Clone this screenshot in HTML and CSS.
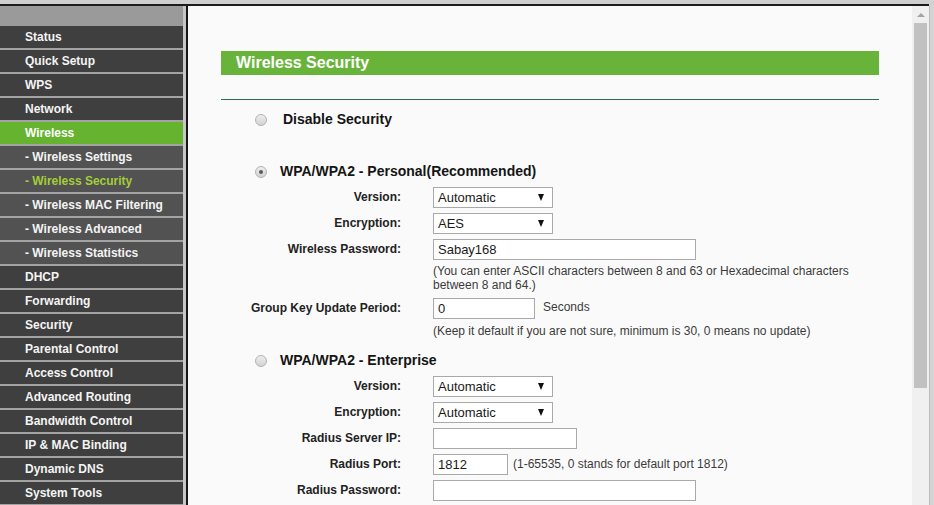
FILE: index.html
```html
<!DOCTYPE html>
<html lang="en">
<head>
    <meta charset="UTF-8">
    <title>Wireless Security</title>
    <link rel="stylesheet" href="styles.css">
</head>
<body>
    <div class="window">
        <div class="chrome-top"></div>
        <div class="frames">
            <!-- Left menu frame -->
            <nav class="menu">
                <div class="menu-head"></div>
                <a class="menu-item">Status</a>
                <a class="menu-item">Quick Setup</a>
                <a class="menu-item">WPS</a>
                <a class="menu-item">Network</a>
                <a class="menu-item active">Wireless</a>
                <a class="menu-item sub">- Wireless Settings</a>
                <a class="menu-item sub current">- Wireless Security</a>
                <a class="menu-item sub">- Wireless MAC Filtering</a>
                <a class="menu-item sub">- Wireless Advanced</a>
                <a class="menu-item sub">- Wireless Statistics</a>
                <a class="menu-item">DHCP</a>
                <a class="menu-item">Forwarding</a>
                <a class="menu-item">Security</a>
                <a class="menu-item">Parental Control</a>
                <a class="menu-item">Access Control</a>
                <a class="menu-item">Advanced Routing</a>
                <a class="menu-item">Bandwidth Control</a>
                <a class="menu-item">IP &amp; MAC Binding</a>
                <a class="menu-item">Dynamic DNS</a>
                <a class="menu-item">System Tools</a>
            </nav>
            <div class="frame-sep"></div>

            <!-- Main frame -->
            <div class="main">
                <div class="page">
                    <div class="page-title">Wireless Security</div>
                    <div class="title-rule"></div>

                    <div class="opt opt-first">
                        <span class="radio"></span>
                        <span class="opt-title wide">Disable Security</span>
                    </div>

                    <div class="opt opt-personal">
                        <span class="radio checked"></span>
                        <span class="opt-title">WPA/WPA2 - Personal(Recommended)</span>
                    </div>
                    <div class="row row-first">
                        <label>Version:</label>
                        <div class="select w-sel"><span>Automatic</span><i class="arrow"></i></div>
                    </div>
                    <div class="row">
                        <label>Encryption:</label>
                        <div class="select w-sel"><span>AES</span><i class="arrow"></i></div>
                    </div>
                    <div class="row">
                        <label>Wireless Password:</label>
                        <div class="field w-long">Sabay168</div>
                    </div>
                    <p class="help help-pass">(You can enter ASCII characters between 8 and 63 or Hexadecimal characters between 8 and 64.)</p>
                    <div class="row row-group">
                        <label>Group Key Update Period:</label>
                        <div class="field w-group">0</div>
                        <span class="unit">Seconds</span>
                    </div>
                    <p class="help help-group">(Keep it default if you are not sure, minimum is 30, 0 means no update)</p>

                    <div class="opt opt-enterprise">
                        <span class="radio"></span>
                        <span class="opt-title">WPA/WPA2 - Enterprise</span>
                    </div>
                    <div class="row row-ent">
                        <label>Version:</label>
                        <div class="select w-sel"><span>Automatic</span><i class="arrow"></i></div>
                    </div>
                    <div class="row">
                        <label>Encryption:</label>
                        <div class="select w-sel"><span>Automatic</span><i class="arrow"></i></div>
                    </div>
                    <div class="row">
                        <label>Radius Server IP:</label>
                        <div class="field w-ip"></div>
                    </div>
                    <div class="row">
                        <label>Radius Port:</label>
                        <div class="field w-port">1812</div>
                        <span class="unit unit-port">(1-65535, 0 stands for default port 1812)</span>
                    </div>
                    <div class="row">
                        <label>Radius Password:</label>
                        <div class="field w-long"></div>
                    </div>
                </div>
            </div>

            <!-- Frame scrollbar -->
            <div class="scrollbar">
                <div class="scroll-up"><i></i></div>
                <div class="scroll-thumb"></div>
            </div>
            <div class="window-edge"></div>
        </div>
    </div>
</body>
</html>
```

FILE: styles.css
```css
body {
    margin: 0;
    padding: 0;
    font-family: 'Liberation Sans', Arial, sans-serif;
    background-color: #d2d2d2;
    overflow: hidden;
}
.window {
    width: 934px;
    height: 505px;
    display: flex;
    flex-direction: column;
}
.chrome-top {
    height: 4px;
    background-color: #cfcfcf;
    border-bottom: 2px solid #1c1c1c;
    margin-right: 5px;
}
.frames {
    flex: 1;
    display: flex;
    overflow: hidden;
}

/* Left menu */
.menu {
    width: 183px;
    background-color: #a3a3a3;
    display: flex;
    flex-direction: column;
    flex-shrink: 0;
}
.menu-head {
    height: 20px;
    flex-shrink: 0;
    background-color: #9a9a9a;
}
.menu-item {
    display: block;
    flex-shrink: 0;
    height: 22px;
    line-height: 22px;
    margin-bottom: 2px;
    padding-left: 25px;
    background-color: #3f3f3f;
    color: #f4f4f4;
    font-size: 12px;
    font-weight: bold;
    white-space: nowrap;
}
.menu-item.sub {
    background-color: #525252;
}
.menu-item.active {
    background-color: #65b32e;
    color: #ffffff;
}
.menu-item.current {
    color: #a4cd39;
}
.frame-sep {
    width: 3px;
    flex-shrink: 0;
    background-color: #c6c6c6;
    border-right: 2px solid #151515;
}

/* Main frame */
.main {
    flex: 1;
    background-color: #fafafa;
    overflow: hidden;
}
.page {
    padding: 45px 0 0 33px;
    width: 658px;
    color: #1e1e1e;
}
.page-title {
    height: 24px;
    line-height: 24px;
    background-color: #68b43a;
    color: #ffffff;
    font-size: 16px;
    font-weight: bold;
    padding-left: 15px;
}
.title-rule {
    height: 1px;
    margin-top: 24px;
    background-color: #2d6b52;
}

.opt {
    display: flex;
    align-items: center;
    height: 24px;
    padding-left: 34px;
}
.opt-first {
    margin-top: 7px;
}
.opt-personal {
    margin-top: 28px;
}
.opt-enterprise {
    margin-top: 10px;
}
.opt-title {
    margin-left: 13px;
    font-size: 14px;
    font-weight: bold;
    color: #151515;
}
.opt-title.wide {
    margin-left: 16px;
}
.radio {
    width: 12px;
    height: 12px;
    box-sizing: border-box;
    border-radius: 50%;
    border: 1px solid #b3b3b3;
    background: linear-gradient(#eeeeee, #d2d2d2);
    margin-top: 2px;
    display: flex;
    align-items: center;
    justify-content: center;
}
.radio.checked::after {
    content: "";
    width: 4px;
    height: 4px;
    border-radius: 50%;
    background-color: #5a5a5a;
}

.row {
    display: flex;
    align-items: center;
    height: 26px;
}
.row label {
    width: 180px;
    margin-right: 32px;
    text-align: right;
    font-size: 12px;
    font-weight: bold;
    color: #222;
}
.row-first {
    margin-top: 1px;
}
.row-group {
    margin-top: 3px;
}
.row-ent {
    margin-top: 1px;
}
.select, .field {
    height: 21px;
    box-sizing: border-box;
    border: 1px solid #a9a9a9;
    background-color: #ffffff;
    font-size: 13px;
    line-height: 19px;
    padding-left: 4px;
    color: #1a1a1a;
}
.select {
    display: flex;
    align-items: center;
    justify-content: space-between;
    padding-right: 8px;
}
.arrow {
    width: 0;
    height: 0;
    border-left: 3.5px solid transparent;
    border-right: 3.5px solid transparent;
    border-top: 7px solid #111;
    margin-top: 1px;
}
.w-sel { width: 120px; }
.w-long { width: 263px; }
.w-group { width: 102px; }
.w-ip { width: 144px; }
.w-port { width: 75px; }

.unit {
    margin-left: 8px;
    margin-top: -3px;
    font-size: 12px;
    color: #3a3a3a;
}
.unit-port {
    margin-left: 5px;
    margin-top: 0;
}
.help {
    margin: 0 0 0 212px;
    font-size: 12px;
    line-height: 14px;
    color: #3a3a3a;
}
.help-pass {
    margin-top: 2px;
}
.help-group {
    margin-top: 3px;
}

/* Scrollbar of the main frame */
.scrollbar {
    width: 17px;
    flex-shrink: 0;
    background-color: #f0f0f0;
    display: flex;
    flex-direction: column;
    align-items: center;
}
.scroll-up {
    height: 17px;
    width: 17px;
    display: flex;
    align-items: center;
    justify-content: center;
}
.scroll-up i {
    width: 0;
    height: 0;
    border-left: 4px solid transparent;
    border-right: 4px solid transparent;
    border-bottom: 4px solid #a3a3a3;
}
.scroll-thumb {
    width: 13px;
    height: 365px;
    background-color: #c1c1c1;
}
.window-edge {
    width: 5px;
    flex-shrink: 0;
    background-color: #d4d4d4;
    border-left: 1px solid #bdbdbd;
    box-sizing: border-box;
}
```
